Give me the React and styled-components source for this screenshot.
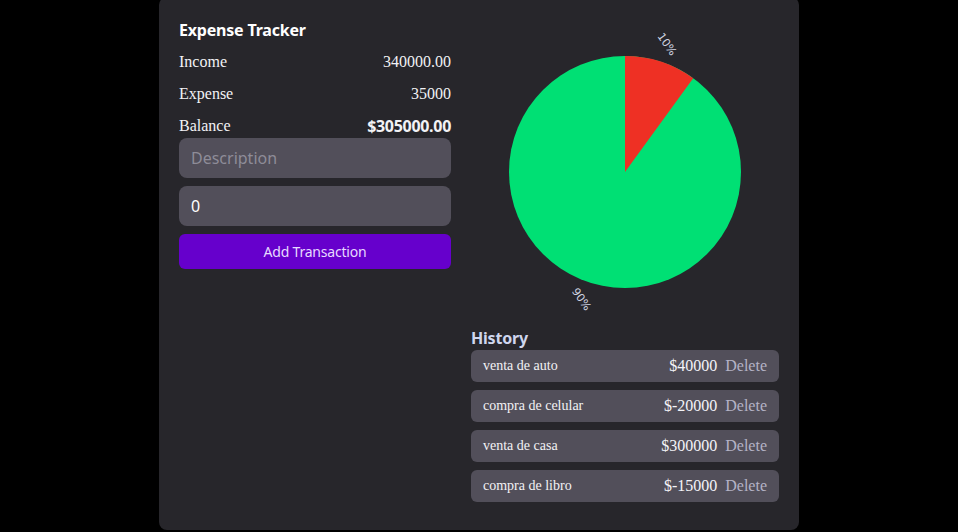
import React from "react";
import styled, { createGlobalStyle } from "styled-components";

const Global = createGlobalStyle`
  html, body { margin: 0; padding: 0; background: #000; }
  body { font-family: "Liberation Serif", serif; color: #f2f2f5; }
  #root { display: flex; justify-content: center; }
`;

const Card = styled.div`
  width: 640px;
  box-sizing: border-box;
  margin-top: -3px;
  padding: 23px 20px 28px;
  background: #27262b;
  border-radius: 8px;
  display: grid;
  grid-template-columns: 272px 308px;
  column-gap: 20px;
  align-items: start;
`;

const Left = styled.div`
  display: flex;
  flex-direction: column;
`;

const Title = styled.h1`
  margin: 0 0 13px;
  font-family: "Noto Sans", sans-serif;
  font-weight: 700;
  font-size: 16px;
  line-height: 20px;
  color: #ffffff;
  letter-spacing: -0.2px;
`;

const StatRow = styled.div`
  display: flex;
  justify-content: space-between;
  align-items: center;
  height: 18px;
  margin-bottom: 14px;
  font-size: 16px;
  &:last-of-type { margin-bottom: 3px; }
`;

const StatValue = styled.span`
  font-family: ${(p) => (p.$strong ? '"Noto Sans", sans-serif' : '"Liberation Serif", serif')};
  font-weight: ${(p) => (p.$strong ? 700 : 400)};
  letter-spacing: ${(p) => (p.$strong ? "-0.3px" : "0")};
`;

const Input = styled.input`
  box-sizing: border-box;
  width: 100%;
  height: 40px;
  margin-bottom: 8px;
  padding: 0 12px;
  border: none;
  outline: none;
  border-radius: 8px;
  background: #524f5a;
  color: #ffffff;
  font-family: "Noto Sans", sans-serif;
  font-size: 16px;
  &::placeholder { color: #8e8c98; }
`;

const Button = styled.button`
  height: 35px;
  border: none;
  border-radius: 6px;
  background: #6600cc;
  color: #e6d9ff;
  font-family: "Noto Sans", sans-serif;
  font-size: 14px;
  letter-spacing: -0.2px;
  cursor: pointer;
`;

const Right = styled.div`
  display: flex;
  flex-direction: column;
`;

const ChartBox = styled.div`
  height: 328px;
  margin-top: -20px;
`;

const HistoryTitle = styled.h2`
  margin: 0 0 2px;
  font-family: "Noto Sans", sans-serif;
  font-weight: 700;
  font-size: 16px;
  line-height: 20px;
  color: #cfd6ee;
  letter-spacing: -0.2px;
`;

const List = styled.div`
  display: flex;
  flex-direction: column;
  gap: 8px;
`;

const Item = styled.div`
  display: flex;
  align-items: center;
  height: 32px;
  padding: 0 12px;
  border-radius: 6px;
  background: #524f5a;
`;

const ItemName = styled.span`
  flex: 1;
  font-size: 14px;
  color: #f2f2f5;
`;

const ItemAmount = styled.span`
  font-size: 16px;
  color: #f4f4f8;
`;

const DeleteBtn = styled.span`
  margin-left: 8px;
  font-size: 16px;
  color: #b4b3c6;
  cursor: pointer;
`;

const PieLabel = styled.text`
  font-family: "DejaVu Sans", sans-serif;
  font-size: 11px;
  fill: #cfd3e0;
`;

const items = [
  { name: "venta de auto", amount: "$40000" },
  { name: "compra de celular", amount: "$-20000" },
  { name: "venta de casa", amount: "$300000" },
  { name: "compra de libro", amount: "$-15000" },
];

function Pie() {
  const cx = 154, cy = 172, r = 116;
  const a = (36 * Math.PI) / 180;
  const ex = cx + r * Math.sin(a);
  const ey = cy - r * Math.cos(a);
  const lab = (deg, rr) => {
    const t = (deg * Math.PI) / 180;
    return [cx + rr * Math.sin(t), cy - rr * Math.cos(t)];
  };
  const [l1x, l1y] = lab(18, 134);
  const [l2x, l2y] = lab(199, 135);
  return (
    <svg width="308" height="328" viewBox="0 0 308 328">
      <circle cx={cx} cy={cy} r={r} fill="#00e074" />
      <path d={`M${cx} ${cy} L${cx} ${cy - r} A${r} ${r} 0 0 1 ${ex} ${ey} Z`} fill="#ee3024" />
      <PieLabel x={l1x} y={l1y} textAnchor="middle" dominantBaseline="middle" transform={`rotate(55 ${l1x} ${l1y})`}>10%</PieLabel>
      <PieLabel x={l2x} y={l2y} textAnchor="middle" dominantBaseline="middle" transform={`rotate(55 ${l2x} ${l2y})`}>90%</PieLabel>
    </svg>
  );
}

export default function App() {
  return (
    <>
      <Global />
      <Card>
        <Left>
          <Title>Expense Tracker</Title>
          <StatRow><span>Income</span><StatValue>340000.00</StatValue></StatRow>
          <StatRow><span>Expense</span><StatValue>35000</StatValue></StatRow>
          <StatRow><span>Balance</span><StatValue $strong>$305000.00</StatValue></StatRow>
          <Input placeholder="Description" />
          <Input defaultValue="0" />
          <Button>Add Transaction</Button>
        </Left>
        <Right>
          <ChartBox><Pie /></ChartBox>
          <HistoryTitle>History</HistoryTitle>
          <List>
            {items.map((it) => (
              <Item key={it.name}>
                <ItemName>{it.name}</ItemName>
                <ItemAmount>{it.amount}</ItemAmount>
                <DeleteBtn>Delete</DeleteBtn>
              </Item>
            ))}
          </List>
        </Right>
      </Card>
    </>
  );
}
